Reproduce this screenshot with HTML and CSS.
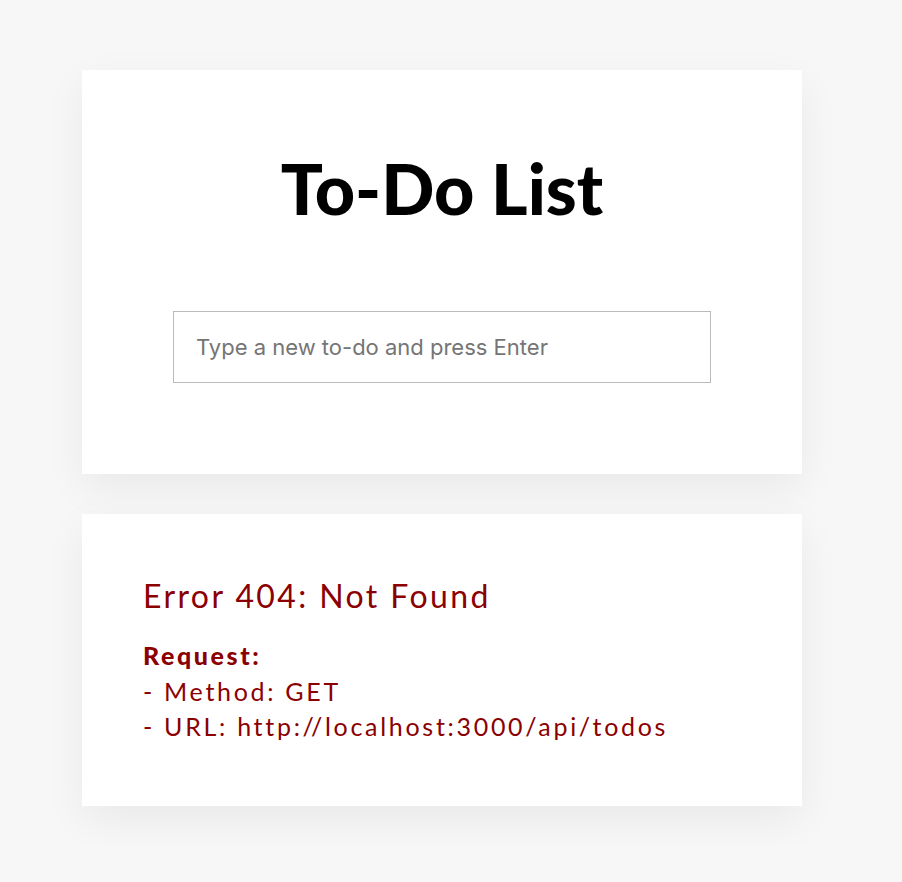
FILE: index.html
```html
<!DOCTYPE html>
<html lang="en">
<head>
<meta charset="utf-8">
<title>To-Do List</title>
<link rel="stylesheet" href="styles.css">
</head>
<body>
<main class="page">
  <section class="card card-main">
    <h1 class="title">To-Do List</h1>
    <input class="new-todo" type="text" placeholder="Type a new to-do and press Enter">
  </section>
  <section class="card card-error">
    <p class="error-title">Error 404: Not Found</p>
    <div class="error-details">
      <strong class="label">Request:</strong>
      <div>- Method: GET</div>
      <div>- URL: http://localhost:3000/api/todos</div>
    </div>
  </section>
</main>
</body>
</html>
```
FILE: styles.css
```css
html, body {
  margin: 0;
  padding: 0;
  background: #f7f7f7;
}
body {
  font-family: "Lato", "Noto Sans", sans-serif;
}
.page {
  width: 720px;
  margin: 0 0 0 82px;
  padding: 70px 0 40px;
  display: flex;
  flex-direction: column;
  gap: 40px;
}
.card {
  background: #fff;
  box-shadow: 0 14px 40px rgba(0, 0, 0, 0.06);
  box-sizing: border-box;
}
.card-main {
  height: 404px;
  padding-top: 83px;
  display: flex;
  flex-direction: column;
  align-items: center;
}
.title {
  margin: 0;
  font-size: 70px;
  font-weight: 900;
  line-height: 1;
  color: #000;
}
.new-todo {
  margin-top: 88px;
  width: 538px;
  height: 72px;
  box-sizing: border-box;
  border: 1px solid #bbb;
  padding: 0 22px;
  font-family: "Inter", "Liberation Sans", sans-serif;
  font-size: 22px;
  outline: none;
}
.new-todo::placeholder {
  color: #757575;
}
.card-error {
  height: 292px;
  padding: 60px 61px;
  color: #8b0000;
}
.error-title {
  margin: 0 0 20px;
  font-size: 32px;
  letter-spacing: 2.4px;
  line-height: 44px;
}
.error-details {
  font-size: 25px;
  line-height: 35.5px;
  letter-spacing: 2.7px;
}
.label {
  display: block;
  font-weight: 900;
  letter-spacing: 2.6px;
}
```
